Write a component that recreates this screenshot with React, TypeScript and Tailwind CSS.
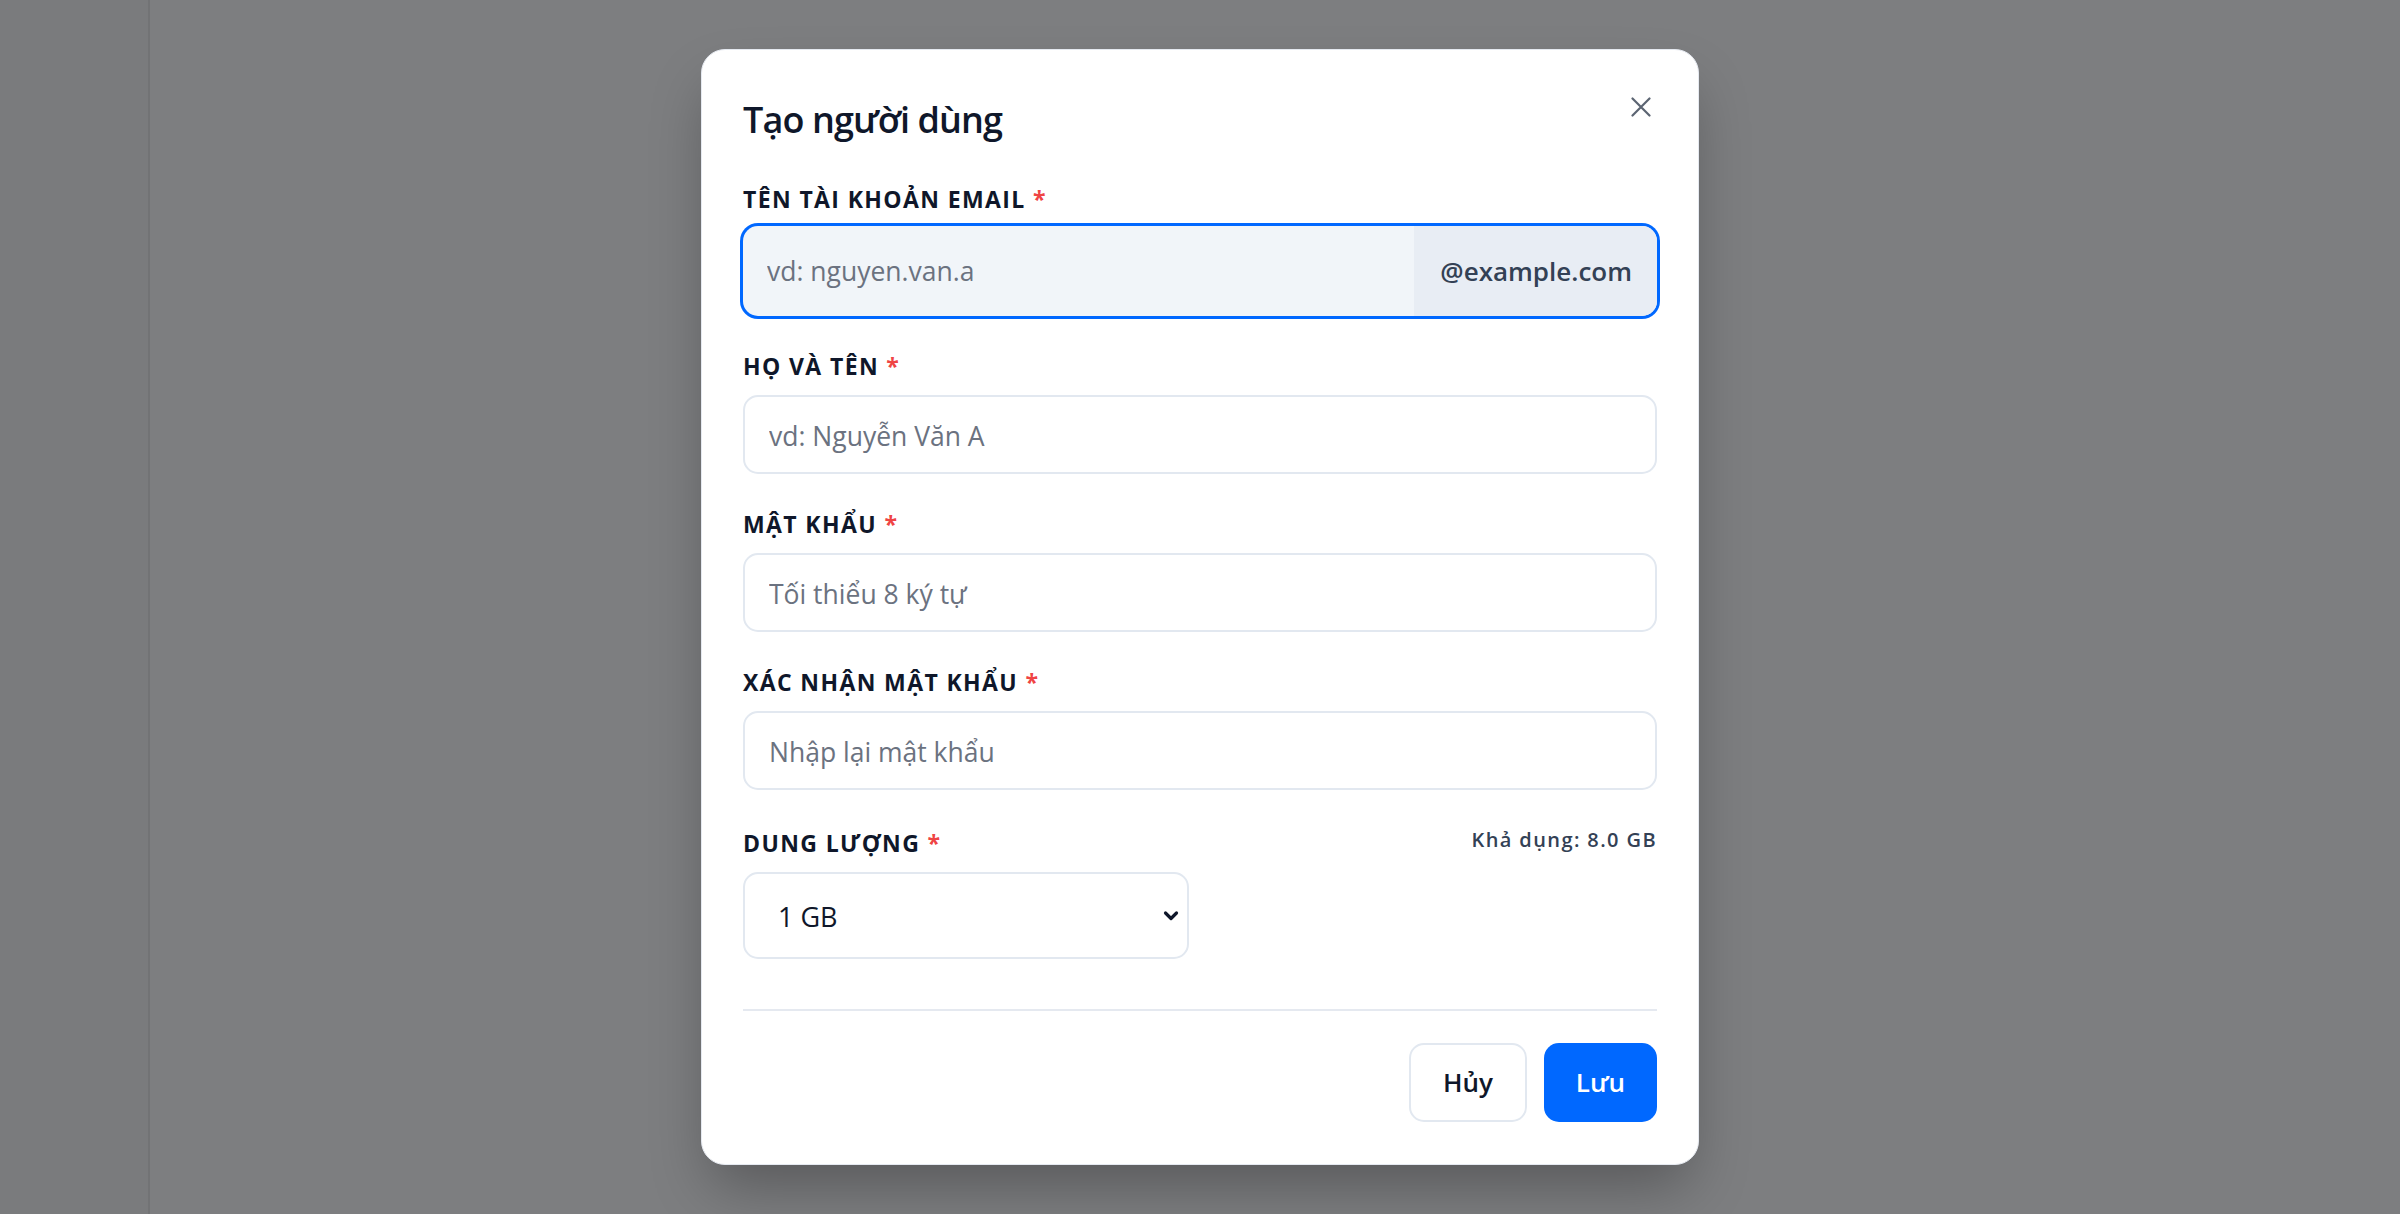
import { useState } from "react";

const fields = [
  { label: "Họ và tên", placeholder: "vd: Nguyễn Văn A", type: "text" },
  { label: "Mật khẩu", placeholder: "Tối thiểu 8 ký tự", type: "password" },
  { label: "Xác nhận mật khẩu", placeholder: "Nhập lại mật khẩu", type: "password" },
];

function Label({ text }: { text: string }) {
  return (
    <label className="block text-[23px] leading-[30px] font-bold uppercase tracking-[0.06em] text-[#0f172a]">
      {text} <span className="text-[#ef4444]">*</span>
    </label>
  );
}

export default function App() {
  const [quota, setQuota] = useState("1");

  return (
    <div className="relative h-screen w-full overflow-hidden font-['Open_Sans',sans-serif]">
      {/* page behind the overlay */}
      <div className="flex h-full">
        <div className="w-[150px] border-r-2 border-[#727375] bg-[#7a7b7d]" />
        <div className="flex-1 bg-[#7d7e80]" />
      </div>

      <div className="absolute inset-0 flex items-center justify-center">
        <div className="relative w-[998px] rounded-[24px] border border-[#e5e9f0] bg-white px-[41px] pt-[46px] pb-[42px] shadow-[0_30px_60px_-10px_rgba(0,0,0,0.3)]">
          <button className="absolute top-[39px] right-[39px] p-[8px] text-[#5b6472]" aria-label="Đóng">
            <svg width="20" height="20" viewBox="0 0 20 20" fill="none" stroke="currentColor" strokeWidth="2.2" strokeLinecap="round">
              <path d="M1.5 1.5 18.5 18.5M18.5 1.5 1.5 18.5" />
            </svg>
          </button>

          <h2 className="text-[36px] leading-[48px] font-semibold tracking-[-0.025em] text-[#0f172a]">Tạo người dùng</h2>

          <div className="mt-[40px]">
            <Label text="Tên tài khoản email" />
            <div className="mt-[12px] flex h-[90px] overflow-hidden rounded-[15px] bg-[#f1f5f9] ring-[3px] ring-[#0068ff]">
              <input
                className="min-w-0 flex-1 bg-transparent px-[24px] pt-[2px] text-[26.5px] text-[#0f172a] outline-none placeholder:text-[#6b7280]"
                placeholder="vd: nguyen.van.a"
              />
              <div className="flex items-center bg-[#e8edf4] pl-[26px] pr-[25px] text-[26px] font-semibold text-[#334155]">
                @example.com
              </div>
            </div>
          </div>

          {fields.map((f) => (
            <div key={f.label} className="mt-[35px]">
              <Label text={f.label} />
              <input
                type={f.type}
                className="mt-[14px] block h-[79px] w-full rounded-[15px] border-2 border-[#e2e8f0] bg-white px-[24px] pt-[2px] text-[26.5px] text-[#0f172a] outline-none placeholder:text-[#6b7280]"
                placeholder={f.placeholder}
              />
            </div>
          ))}

          <div className="mt-[38px]">
            <div className="flex items-start justify-between">
              <Label text="Dung lượng" />
              <span className="text-[20px] leading-[24px] font-semibold tracking-[0.07em] text-[#334155]">Khả dụng: 8.0 GB</span>
            </div>
            <div className="relative mt-[14px] w-[446px]">
              <select
                value={quota}
                onChange={(e) => setQuota(e.target.value)}
                className="block h-[87px] w-full appearance-none rounded-[15px] border-2 border-[#e2e8f0] bg-white pt-[4px] pl-[33px] pr-[40px] text-[27px] text-[#0f172a] outline-none"
              >
                <option value="1">1 GB</option>
                <option value="2">2 GB</option>
                <option value="5">5 GB</option>
              </select>
              <svg
                className="pointer-events-none absolute top-1/2 right-[10px] -translate-y-1/2"
                width="16"
                height="11"
                viewBox="0 0 16 11"
                fill="none"
                stroke="#0f172a"
                strokeWidth="3.2"
                strokeLinecap="round"
                strokeLinejoin="round"
              >
                <path d="M2.5 2.5 8 8l5.5-5.5" />
              </svg>
            </div>
          </div>

          <div className="mt-[50px] h-[2px] bg-[#e5e9f0]" />

          <div className="mt-[32px] flex justify-end gap-[17px]">
            <button className="h-[79px] rounded-[15px] border-2 border-[#e2e8f0] bg-white px-[32px] text-[26px] font-semibold text-[#0f172a]">
              Hủy
            </button>
            <button className="h-[79px] rounded-[15px] bg-[#0068ff] px-[32px] text-[26px] font-semibold text-white">
              Lưu
            </button>
          </div>
        </div>
      </div>
    </div>
  );
}
